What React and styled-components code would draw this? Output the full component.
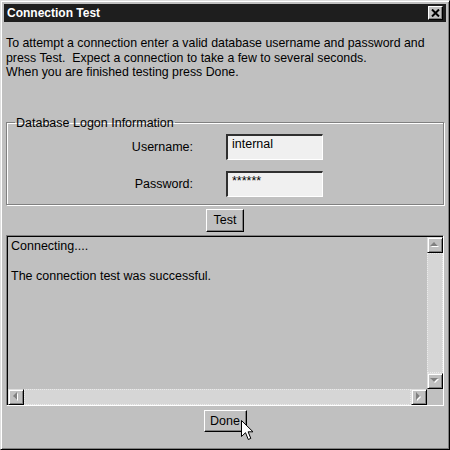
import React from "react";
import styled, { createGlobalStyle } from "styled-components";

const GlobalStyle = createGlobalStyle`
  html, body {
    margin: 0;
    padding: 0;
    background: #c0c0c0;
  }
  body {
    font-family: "Liberation Sans", Arial, sans-serif;
  }
`;

const Window = styled.div`
  box-sizing: border-box;
  width: 450px;
  height: 450px;
  padding: 3px;
  background: #c0c0c0;
  border: 1px solid;
  border-color: #dfdfdf #000 #000 #dfdfdf;
  box-shadow: inset 1px 1px 0 #fff, inset -1px -1px 0 #808080;
  display: flex;
  flex-direction: column;
  color: #000;
  font-size: 12.5px;
`;

const TitleBar = styled.div`
  height: 18px;
  flex-shrink: 0;
  background: #1e1e1e;
  display: flex;
  align-items: center;
  justify-content: space-between;
  padding: 0 3px;
`;

const Title = styled.span`
  color: #fff;
  font-weight: bold;
  font-size: 12px;
`;

const CloseButton = styled.div`
  box-sizing: border-box;
  width: 15px;
  height: 14px;
  background: #c0c0c0;
  border: 1px solid;
  border-color: #fff #000 #000 #fff;
  box-shadow: inset -1px -1px 0 #808080;
  display: flex;
  align-items: center;
  justify-content: center;
`;

const Body = styled.div`
  padding: 0 2px;
  display: flex;
  flex-direction: column;
`;

const Intro = styled.p`
  margin: 14px 0 0;
  font-size: 12.35px;
  line-height: 14.5px;
`;

const GroupBox = styled.fieldset`
  margin: 36px 0 0;
  padding: 4px 0 7px;
  border: 1px solid #808080;
  box-shadow: inset 1px 1px 0 #fff, 1px 1px 0 #fff;
  min-width: 0;
`;

const Legend = styled.legend`
  margin-left: 8px;
  padding: 0 1px;
  line-height: 14px;
`;

const Fields = styled.div`
  display: grid;
  grid-template-columns: 186px 97px;
  column-gap: 33px;
  row-gap: 11px;
  align-items: center;
`;

const Label = styled.label`
  text-align: right;
`;

const TextBox = styled.input`
  box-sizing: border-box;
  width: 97px;
  height: 26px;
  margin: 0;
  padding: 0 0 7px 4px;
  border-style: solid;
  border-width: 2px 1px 1px 2px;
  border-color: #303030 #fff #fff #303030;
  background: #f0f0f0;
  font: inherit;
  color: #000;
  outline: none;
`;

const PushButton = styled.button`
  box-sizing: border-box;
  align-self: center;
  width: ${(p) => p.$width}px;
  height: ${(p) => p.$height}px;
  margin: ${(p) => p.$top}px 0 0;
  padding: 0;
  background: #c0c0c0;
  border: 1px solid;
  border-color: #fff #000 #000 #fff;
  box-shadow: inset -1px -1px 0 #808080;
  font: inherit;
  color: #000;
`;

const LogFrame = styled.div`
  box-sizing: border-box;
  margin-top: 3px;
  height: 171px;
  border: 1px solid;
  border-color: #808080 #fff #fff #808080;
  display: flex;
`;

const LogInner = styled.div`
  flex: 1;
  border-top: 1px solid #000;
  border-left: 1px solid #000;
  display: grid;
  grid-template-columns: 1fr 16px;
  grid-template-rows: 1fr 16px;
`;

const LogText = styled.div`
  padding: 2px 3px;
  line-height: 15px;
  white-space: pre-line;
`;

const ScrollBar = styled.div`
  display: flex;
  flex-direction: ${(p) => (p.$vertical ? "column" : "row")};
`;

const Track = styled.div`
  flex: 1;
  background: #d6d6d6;
  outline: 1px dotted #ebebeb;
  outline-offset: -1px;
`;

const ArrowButton = styled.div`
  box-sizing: border-box;
  width: 16px;
  height: 16px;
  flex-shrink: 0;
  background: #c0c0c0;
  border: 1px solid;
  border-color: #dfdfdf #000 #000 #dfdfdf;
  box-shadow: inset 1px 1px 0 #fff, inset -1px -1px 0 #808080;
  display: flex;
  align-items: center;
  justify-content: center;
`;

const Corner = styled.div`
  background: #c0c0c0;
`;

const Footer = styled.div`
  position: relative;
  align-self: center;
  margin-top: 4px;
  display: flex;
`;

const Pointer = styled.svg`
  position: absolute;
  left: 37px;
  top: 10px;
`;

const arrows = {
  up: "4,0 0,4 8,4",
  down: "0,0 8,0 4,4",
  left: "4,0 4,8 0,4",
  right: "0,0 0,8 4,4",
};

function Arrow({ dir }) {
  const vertical = dir === "up" || dir === "down";
  const w = vertical ? 10 : 6;
  const h = vertical ? 6 : 10;
  return (
    <ArrowButton>
      <svg width={w} height={h} viewBox={`0 0 ${w} ${h}`}>
        <polygon points={arrows[dir]} fill="#fff" transform="translate(1 1)" />
        <polygon points={arrows[dir]} fill="#808080" />
      </svg>
    </ArrowButton>
  );
}

export default function App() {
  return (
    <>
      <GlobalStyle />
      <Window>
        <TitleBar>
          <Title>Connection Test</Title>
          <CloseButton>
            <svg width="9" height="8" viewBox="0 0 9 8">
              <path d="M1 0.5 L8 7.5 M8 0.5 L1 7.5" stroke="#000" strokeWidth="2" />
            </svg>
          </CloseButton>
        </TitleBar>
        <Body>
          <Intro>
            To attempt a connection enter a valid database username and password and
            <br />
            press Test.&nbsp; Expect a connection to take a few to several seconds.
            <br />
            When you are finished testing press Done.
          </Intro>
          <GroupBox>
            <Legend>Database Logon Information</Legend>
            <Fields>
              <Label htmlFor="user">Username:</Label>
              <TextBox id="user" defaultValue="internal" readOnly />
              <Label htmlFor="pass">Password:</Label>
              <TextBox id="pass" defaultValue="******" readOnly />
            </Fields>
          </GroupBox>
          <PushButton $width={38} $height={23} $top={4}>
            Test
          </PushButton>
          <LogFrame>
            <LogInner>
              <LogText>{"Connecting....\n\nThe connection test was successful."}</LogText>
              <ScrollBar $vertical>
                <Arrow dir="up" />
                <Track />
                <Arrow dir="down" />
              </ScrollBar>
              <ScrollBar>
                <Arrow dir="left" />
                <Track />
                <Arrow dir="right" />
              </ScrollBar>
              <Corner />
            </LogInner>
          </LogFrame>
          <Footer>
            <PushButton $width={43} $height={22} $top={0}>
              Done
            </PushButton>
            <Pointer width="13" height="21" viewBox="0 0 13 21">
              <path
                d="M0.5 0.5 V16.5 L4.5 12.7 L7.3 19.5 L9.8 18.4 L7.1 11.8 L12 11.8 Z"
                fill="#fff"
                stroke="#000"
                strokeWidth="1"
              />
            </Pointer>
          </Footer>
        </Body>
      </Window>
    </>
  );
}
